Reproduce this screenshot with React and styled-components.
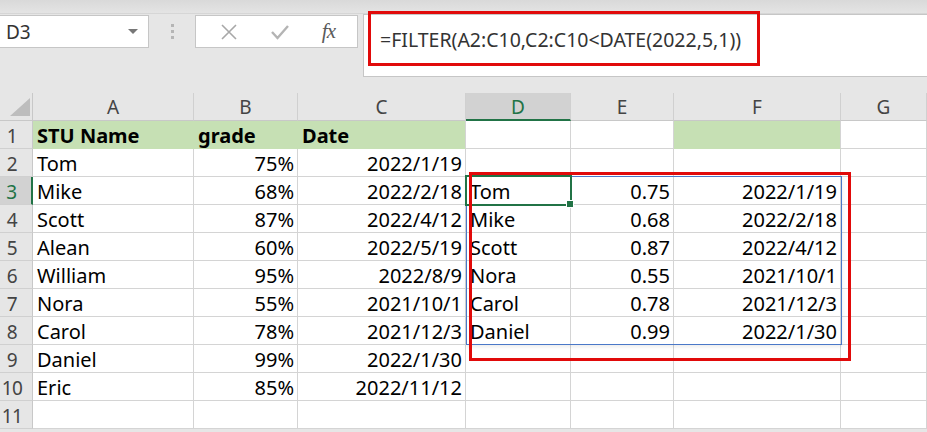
import styled, { createGlobalStyle } from 'styled-components'

const GlobalStyle = createGlobalStyle`
  html, body {
    margin: 0;
    padding: 0;
    background: #e6e6e6;
    overflow: hidden;
  }
  body {
    font-family: "Noto Sans", "Open Sans", sans-serif;
  }
`

const Page = styled.div`
  width: 927px;
  height: 432px;
  overflow: hidden;
  background: #e6e6e6;
`

// top ribbon edge
const TopStrip = styled.div`
  height: 13px;
  background: linear-gradient(#d9d9d9, #e4e4e4);
  border-bottom: 1px solid #d6d6d6;
`

const Toolbar = styled.div`
  display: flex;
  align-items: flex-start;
  height: 63px;
  margin-bottom: 16px;
`

const NameBox = styled.div`
  width: 149px;
  height: 33px;
  margin-top: 1px;
  box-sizing: border-box;
  background: #fff;
  border: 1px solid #c6c6c6;
  border-left: none;
  display: flex;
  align-items: center;
  justify-content: space-between;
  padding: 0 10px 0 6px;
  font-size: 19px;
  color: #333;
`

const Caret = styled.span`
  width: 0;
  height: 0;
  border-left: 5px solid transparent;
  border-right: 5px solid transparent;
  border-top: 5px solid #777;
`

const Grip = styled.div`
  width: 46px;
  height: 33px;
  margin-top: 1px;
  display: flex;
  flex-direction: column;
  align-items: center;
  justify-content: center;
  gap: 3px;
`

const GripDot = styled.span`
  width: 3px;
  height: 3px;
  background: #b5b5b5;
`

const ButtonBox = styled.div`
  width: 163px;
  height: 33px;
  margin-top: 1px;
  box-sizing: border-box;
  background: #fff;
  border: 1px solid #c6c6c6;
  display: flex;
  align-items: center;
  justify-content: space-around;
  padding: 0 6px 0 8px;
`

const FxLabel = styled.span`
  font-family: "Liberation Serif", serif;
  font-style: italic;
  font-size: 21px;
  color: #5a5a5a;
  letter-spacing: -1px;
`

const FormulaBar = styled.div`
  position: relative;
  margin-left: 5px;
  flex: 1;
  height: 63px;
  box-sizing: border-box;
  background: #fff;
  border: 1px solid #c6c6c6;
  border-right: none;
  padding: 11px 0 0 16px;
  font-size: 19.5px;
  color: #333;
  line-height: 28px;
`

const Annotation = styled.div`
  position: absolute;
  box-sizing: border-box;
  border: 3px solid #e10a0a;
  pointer-events: none;
`

const Sheet = styled.div`
  position: relative;
  display: grid;
  grid-template-columns: 33px 161px 104px 168px 105px 103px 167px 1fr;
  grid-auto-rows: 28px;
  background: #fff;
`

const Corner = styled.div`
  background: #e6e6e6;
  border-right: 1px solid #c8c8c8;
  border-bottom: 1px solid #c8c8c8;
  box-sizing: border-box;
  position: relative;
`

const ColHead = styled.div`
  box-sizing: border-box;
  background: ${(p) => (p.$active ? '#d2d2d2' : '#e6e6e6')};
  border-right: 1px solid #d0d0d0;
  border-bottom: ${(p) => (p.$active ? '2px solid #217346' : '1px solid #c8c8c8')};
  color: ${(p) => (p.$active ? '#217346' : '#444')};
  font-size: 19px;
  text-align: center;
  line-height: 29px;
`

const RowHead = styled.div`
  box-sizing: border-box;
  background: ${(p) => (p.$active ? '#d2d2d2' : '#e6e6e6')};
  border-bottom: 1px solid #d0d0d0;
  border-right: ${(p) => (p.$active ? '2px solid #217346' : '1px solid #c8c8c8')};
  color: ${(p) => (p.$active ? '#217346' : '#444')};
  font-size: 19px;
  line-height: 30px;
  text-align: center;
  padding-right: 8px;
  letter-spacing: -0.5px;
`

const Cell = styled.div`
  box-sizing: border-box;
  background: ${(p) => (p.$fill ? '#c6e0b4' : '#fff')};
  border-right: 1px solid ${(p) => (p.$fill && p.$joined ? '#c6e0b4' : '#d4d4d4')};
  border-bottom: 1px solid ${(p) => (p.$fill ? '#c6e0b4' : '#d4d4d4')};
  font-size: 20px;
  font-weight: ${(p) => (p.$bold ? 700 : 400)};
  color: #000;
  line-height: 28px;
  padding: 1px 3px 0 4px;
  text-align: ${(p) => p.$align || 'left'};
  white-space: nowrap;
  overflow: visible;
`

const Selection = styled.div`
  position: absolute;
  left: 465px;
  top: 82px;
  width: 107px;
  height: 31px;
  box-sizing: border-box;
  border: 2px solid #217346;
`

const FillHandle = styled.span`
  position: absolute;
  right: -4px;
  bottom: -4px;
  width: 6px;
  height: 6px;
  background: #217346;
  border: 1px solid #fff;
`

const SpillRange = styled.div`
  position: absolute;
  left: 466px;
  top: 83px;
  width: 376px;
  height: 169px;
  box-sizing: border-box;
  border: 1px solid #4a78c8;
  box-shadow: 0 2px 4px rgba(0, 0, 0, 0.08);
`

const Cross = () => (
  <svg width="18" height="18" viewBox="0 0 18 18">
    <path d="M2 2 L16 16 M16 2 L2 16" stroke="#a8a8a8" strokeWidth="1.6" fill="none" />
  </svg>
)

const Check = () => (
  <svg width="20" height="18" viewBox="0 0 20 18">
    <path d="M2 9 L7.5 15 L18 3" stroke="#b4b4b4" strokeWidth="2.4" fill="none" />
  </svg>
)

const CornerTriangle = () => (
  <svg width="33" height="28" viewBox="0 0 33 28" style={{ position: 'absolute', left: 0, top: 0 }}>
    <polygon points="30,5 30,23 10,23" fill="#bdbdbd" />
  </svg>
)

const cols = ['A', 'B', 'C', 'D', 'E', 'F', 'G']

const source = [
  ['Tom', '75%', '2022/1/19'],
  ['Mike', '68%', '2022/2/18'],
  ['Scott', '87%', '2022/4/12'],
  ['Alean', '60%', '2022/5/19'],
  ['William', '95%', '2022/8/9'],
  ['Nora', '55%', '2021/10/1'],
  ['Carol', '78%', '2021/12/3'],
  ['Daniel', '99%', '2022/1/30'],
  ['Eric', '85%', '2022/11/12'],
]

const result = [
  ['Tom', '0.75', '2022/1/19'],
  ['Mike', '0.68', '2022/2/18'],
  ['Scott', '0.87', '2022/4/12'],
  ['Nora', '0.55', '2021/10/1'],
  ['Carol', '0.78', '2021/12/3'],
  ['Daniel', '0.99', '2022/1/30'],
]

const align = ['left', 'right', 'right', 'left', 'right', 'right', 'left']

function buildRows() {
  const rows = []
  // row 1 - headers
  rows.push([
    { v: 'STU Name', fill: true, bold: true, joined: true },
    { v: 'grade', fill: true, bold: true, joined: true },
    { v: 'Date', fill: true, bold: true },
    { v: '' },
    { v: '' },
    { v: '', fill: true },
    { v: '' },
  ])
  for (let i = 0; i < 10; i++) {
    const src = source[i] || ['', '', '']
    const res = result[i - 1] || ['', '', '']
    rows.push([...src, ...res, ''].map((v) => ({ v })))
  }
  return rows
}

export default function App() {
  const rows = buildRows()
  return (
    <Page>
      <GlobalStyle />
      <TopStrip />
      <Toolbar>
        <NameBox>
          D3
          <Caret />
        </NameBox>
        <Grip>
          <GripDot />
          <GripDot />
          <GripDot />
        </Grip>
        <ButtonBox>
          <Cross />
          <Check />
          <FxLabel>fx</FxLabel>
        </ButtonBox>
        <FormulaBar>
          =FILTER(A2:C10,C2:C10&lt;DATE(2022,5,1))
          <Annotation style={{ left: 4, top: -4, width: 392, height: 55 }} />
        </FormulaBar>
      </Toolbar>

      <Sheet>
        <Corner>
          <CornerTriangle />
        </Corner>
        {cols.map((c) => (
          <ColHead key={c} $active={c === 'D'}>
            {c}
          </ColHead>
        ))}
        {rows.map((row, r) => [
          <RowHead key={`h${r}`} $active={r === 2}>
            {r + 1}
          </RowHead>,
          ...row.map((cell, c) => (
            <Cell
              key={`${r}-${c}`}
              $fill={cell.fill}
              $bold={cell.bold}
              $joined={cell.joined}
              $align={r === 0 ? 'left' : align[c]}
            >
              {cell.v}
            </Cell>
          )),
        ])}
        <SpillRange />
        <Selection>
          <FillHandle />
        </Selection>
        <Annotation style={{ left: 469, top: 79, width: 382, height: 189 }} />
      </Sheet>
    </Page>
  )
}
